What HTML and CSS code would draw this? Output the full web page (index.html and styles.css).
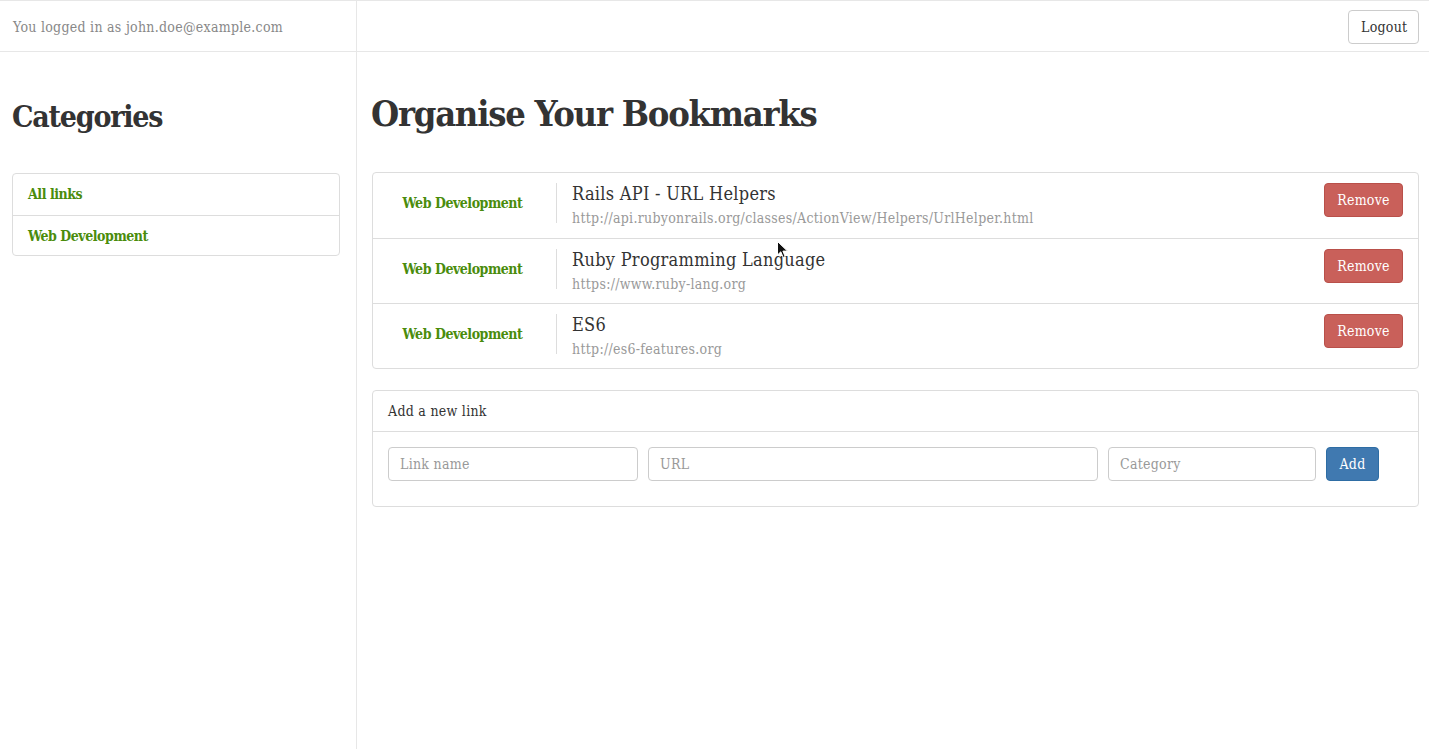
FILE: index.html
```html
<!DOCTYPE html>
<html>
<head>
<meta charset="utf-8">
<link rel="stylesheet" href="styles.css">
</head>
<body>
<header class="topbar">
  <div class="topbar-left">You logged in as john.doe@example.com</div>
  <div class="topbar-right"><button class="btn btn-default">Logout</button></div>
</header>
<div class="layout">
  <aside class="sidebar">
    <h2 class="side-title">Categories</h2>
    <div class="list-group">
      <a class="list-item">All links</a>
      <a class="list-item">Web Development</a>
    </div>
  </aside>
  <main class="main">
    <h1 class="page-title">Organise Your Bookmarks</h1>
    <div class="panel bookmarks">
      <div class="bm-row">
        <div class="bm-cat">Web Development</div>
        <div class="bm-info">
          <div class="bm-title">Rails API - URL Helpers</div>
          <div class="bm-url">http://api.rubyonrails.org/classes/ActionView/Helpers/UrlHelper.html</div>
        </div>
        <button class="btn btn-danger">Remove</button>
      </div>
      <div class="bm-row">
        <div class="bm-cat">Web Development</div>
        <div class="bm-info">
          <div class="bm-title">Ruby Programming Language</div>
          <div class="bm-url">https://www.ruby-lang.org</div>
        </div>
        <button class="btn btn-danger">Remove</button>
      </div>
      <div class="bm-row">
        <div class="bm-cat">Web Development</div>
        <div class="bm-info">
          <div class="bm-title">ES6</div>
          <div class="bm-url">http://es6-features.org</div>
        </div>
        <button class="btn btn-danger">Remove</button>
      </div>
    </div>
    <div class="panel add-panel">
      <div class="panel-heading">Add a new link</div>
      <div class="panel-body">
        <input class="field f-name" placeholder="Link name">
        <input class="field f-url" placeholder="URL">
        <input class="field f-cat" placeholder="Category">
        <button class="btn btn-primary">Add</button>
      </div>
    </div>
  </main>
</div>
<svg class="cursor" width="12" height="18" viewBox="0 0 12 18"><path d="M0.5 0.5 L0.5 14 L3.8 10.8 L6.2 16.5 L8.2 15.6 L5.9 10.1 L10.5 10.1 Z" fill="#111" stroke="#fff" stroke-width="1"/></svg>
</body>
</html>
```
FILE: styles.css
```css
* { box-sizing: border-box; }
html, body { margin: 0; padding: 0; }
body {
  font-family: "DejaVu Serif", "Liberation Serif", serif;
  font-stretch: condensed;
  letter-spacing: 0.02em;
  font-size: 14px;
  color: #333;
  background: #fff;
  height: 749px;
  display: flex;
  flex-direction: column;
  position: relative;
}
.topbar {
  display: flex;
  height: 52px;
  border-top: 1px solid #e7e7e7;
  border-bottom: 1px solid #e7e7e7;
}
.topbar-left {
  width: 357px;
  border-right: 1px solid #e7e7e7;
  padding-left: 13px;
  padding-top: 1px;
  display: flex;
  align-items: center;
  color: #888;
  font-size: 14px;
}
.topbar-right {
  flex: 1;
  display: flex;
  justify-content: flex-end;
  align-items: center;
  padding-right: 10px;
  padding-top: 1px;
}
.btn {
  font-family: inherit;
  font-stretch: inherit;
  letter-spacing: inherit;
  font-size: 14px;
  height: 34px;
  padding: 0 12px;
  border-radius: 4px;
  border: 1px solid #ccc;
  background: #fff;
  color: #333;
  line-height: 1;
}
.btn-default { width: 71px; height: 34px; }
.layout {
  flex: 1;
  display: flex;
}
.sidebar {
  width: 357px;
  border-right: 1px solid #e7e7e7;
  padding: 0 16px 0 12px;
}
.side-title {
  margin: 47px 0 38px;
  font-size: 30px;
  font-weight: bold;
  line-height: 36px;
  letter-spacing: -0.04em;
}
.list-group {
  border: 1px solid #ddd;
  border-radius: 4px;
}
.list-item {
  display: block;
  height: 41px;
  line-height: 41px;
  padding-left: 15px;
  color: #4a8c0c;
  font-weight: bold;
  font-size: 14px;
  letter-spacing: -0.033em;
}
.list-item + .list-item { border-top: 1px solid #ddd; height: 40px; line-height: 40px; }
.main {
  flex: 1;
  padding: 0 10px 0 15px;
}
.page-title {
  margin: 40px 0 38px -1px;
  font-size: 36px;
  font-weight: bold;
  line-height: 42px;
  letter-spacing: -0.035em;
}
.panel {
  border: 1px solid #ddd;
  border-radius: 4px;
  background: #fff;
}
.bm-row {
  display: flex;
  align-items: flex-start;
  height: 65px;
  padding: 10px 15px 0 0;
}
.bm-row + .bm-row { border-top: 1px solid #ddd; }
.bm-cat {
  width: 179px;
  margin-right: 4px;
  text-align: center;
  color: #4a8c0c;
  font-weight: bold;
  font-size: 14px;
  letter-spacing: -0.033em;
  padding-top: 12px;
}
.bm-info {
  flex: 1;
  border-left: 1px solid #ddd;
  padding-left: 15px;
  height: 40px;
}
.bm-title { font-size: 18px; line-height: 20px; margin-top: 1px; }
.bm-url { color: #999; font-size: 14px; line-height: 20px; margin-top: 4px; }
.btn-danger {
  background: #c9605a;
  border-color: #b9504a;
  color: #fff;
  width: 79px;
  padding: 0;
}
.add-panel { margin-top: 21px; }
.panel-heading {
  height: 41px;
  border-bottom: 1px solid #ddd;
  padding-left: 15px;
  display: flex;
  align-items: center;
  font-size: 14px;
  color: #333;
}
.panel-body {
  display: flex;
  padding: 15px 15px 25px;
  gap: 10px;
}
.field {
  height: 34px;
  border: 1px solid #ccc;
  border-radius: 4px;
  padding: 0 11px;
  font-family: inherit;
  font-stretch: inherit;
  letter-spacing: inherit;
  font-size: 14px;
  color: #555;
}
.field::placeholder { color: #999; }
.f-name { width: 250px; }
.f-url { width: 450px; }
.f-cat { width: 208px; }
.btn-primary {
  background: #4079b0;
  border-color: #2e6da4;
  color: #fff;
  width: 53px;
  padding: 0;
}
.cursor {
  position: absolute;
  left: 777px;
  top: 241px;
}
```
